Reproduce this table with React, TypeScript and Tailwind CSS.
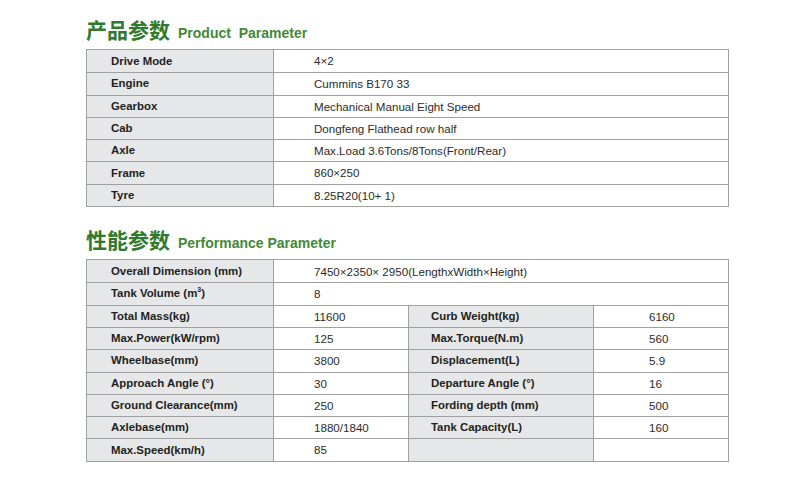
import React from "react";

const font = { fontFamily: '"Liberation Sans", Arial, "Noto Sans CJK SC", sans-serif' };

function Heading({ cn, en }: { cn: string; en: string }) {
  return (
    <div className="flex items-baseline h-[38px] pt-[4px]">
      <span
        className="text-[21px] leading-[28px] font-bold text-[#2f7a2c] tracking-[0px]"
        style={{ fontFamily: '"Noto Sans CJK SC", sans-serif' }}
      >
        {cn}
      </span>
      <span className="ml-[8px] text-[14px] font-bold text-[#3f8a35] whitespace-pre">{en}</span>
    </div>
  );
}

const t1: [string, string][] = [
  ["Drive Mode", "4×2"],
  ["Engine", "Cummins B170 33"],
  ["Gearbox", "Mechanical Manual Eight Speed"],
  ["Cab", "Dongfeng Flathead row half"],
  ["Axle", "Max.Load 3.6Tons/8Tons(Front/Rear)"],
  ["Frame", "860×250"],
  ["Tyre", "8.25R20(10+ 1)"],
];

const t2: [string, string, string, string][] = [
  ["Total Mass(kg)", "11600", "Curb Weight(kg)", "6160"],
  ["Max.Power(kW/rpm)", "125", "Max.Torque(N.m)", "560"],
  ["Wheelbase(mm)", "3800", "Displacement(L)", "5.9"],
  ["Approach Angle (°)", "30", "Departure Angle (°)", "16"],
  ["Ground Clearance(mm)", "250", "Fording depth (mm)", "500"],
  ["Axlebase(mm)", "1880/1840", "Tank Capacity(L)", "160"],
  ["Max.Speed(km/h)", "85", "", ""],
];

const row = "flex h-[22.3px] items-center border-t border-[#a0a0a0] first:border-t-0";
const label = "h-full flex items-center w-[187px] shrink-0 bg-[#e6e7e9] border-r border-[#a0a0a0] pl-[24px] font-bold text-[11.4px] text-[#231f20]";
const val = "h-full flex items-center text-[11.6px] text-[#2b2b2b]";

export default function App() {
  return (
    <div className="w-[807px] h-[482px] bg-white" style={font}>
      <div className="pl-[86px] pt-[11px] w-[729px]">
        <Heading cn="产品参数" en={"Product  Parameter"} />
        <div className="border border-[#a0a0a0]">
          {t1.map(([a, b]) => (
            <div key={a} className={row}>
              <div className={label}>{a}</div>
              <div className={val + " pl-[40px]"}>{b}</div>
            </div>
          ))}
        </div>
        <div className="h-[14px]" />
        <Heading cn="性能参数" en="Performance Parameter" />
        <div className="border border-[#a0a0a0]">
          <div className={row}>
            <div className={label}>Overall Dimension (mm)</div>
            <div className={val + " pl-[40px]"}>7450×2350× 2950(LengthxWidth×Height)</div>
          </div>
          <div className={row}>
            <div className={label}>
              Tank Volume (m<sup className="text-[7px] -top-[4px]">3</sup>)
            </div>
            <div className={val + " pl-[40px]"}>8</div>
          </div>
          {t2.map(([a, b, c, d]) => (
            <div key={a} className={row}>
              <div className={label}>{a}</div>
              <div className={val + " pl-[40px] w-[135px] shrink-0 border-r border-[#a0a0a0]"}>{b}</div>
              <div className={"h-full flex items-center w-[185px] shrink-0 bg-[#e6e7e9] border-r border-[#a0a0a0] pl-[22px] font-bold text-[11.4px] text-[#231f20]"}>{c}</div>
              <div className={val + " pl-[55px]"}>{d}</div>
            </div>
          ))}
        </div>
      </div>
    </div>
  );
}
